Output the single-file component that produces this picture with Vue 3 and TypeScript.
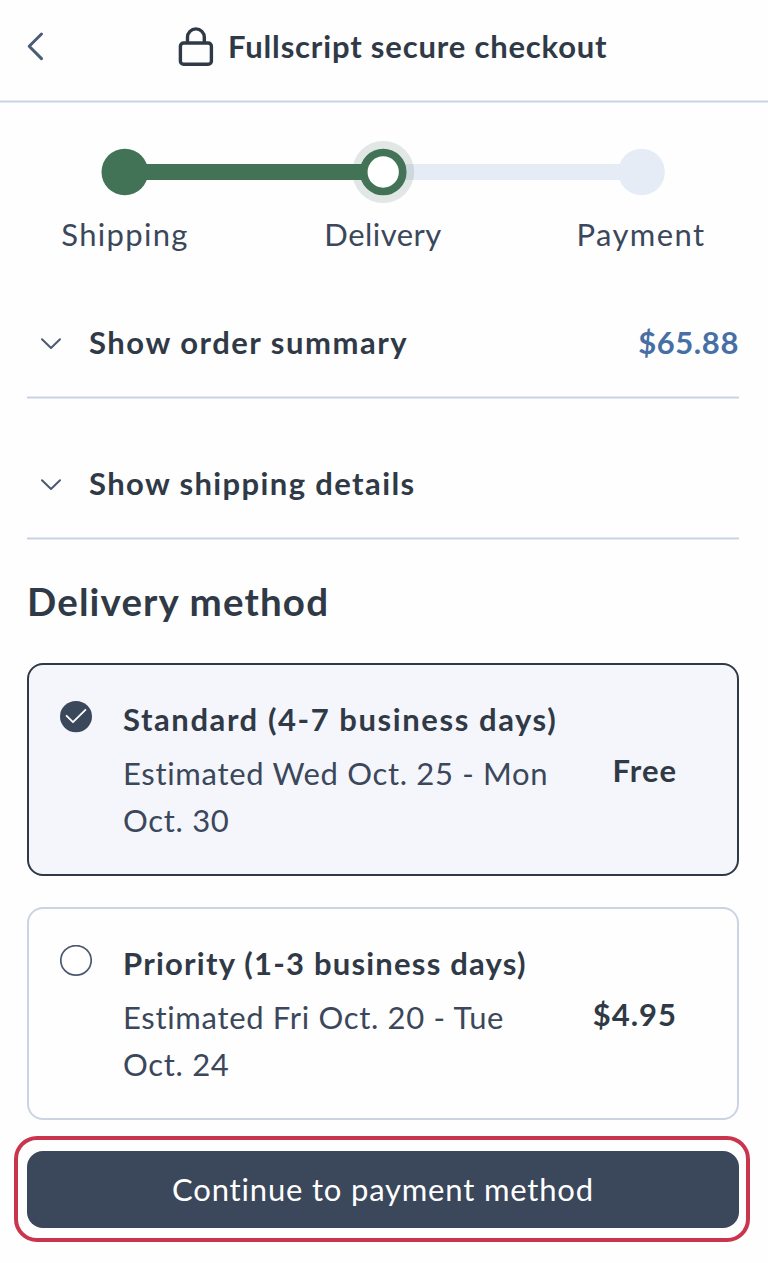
<script setup lang="ts">
import { ref } from 'vue'

interface Method {
  id: string
  title: string
  estimate: string
  price: string
}

const steps: string[] = ['Shipping', 'Delivery', 'Payment']
const methods: Method[] = [
  { id: 'standard', title: 'Standard (4-7 business days)', estimate: 'Estimated Wed Oct. 25 - Mon Oct. 30', price: 'Free' },
  { id: 'priority', title: 'Priority (1-3 business days)', estimate: 'Estimated Fri Oct. 20 - Tue Oct. 24', price: '$4.95' },
]
const selected = ref<string>('standard')
</script>

<template>
  <main class="checkout">
    <header class="header">
      <svg class="back" width="18" height="30" viewBox="0 0 18 30">
        <path d="M15.5 3 L3.2 15.2 L15.5 27.6" />
      </svg>
      <div class="brand">
        <svg class="lock" width="36" height="40" viewBox="0 0 36 40">
          <rect x="2.4" y="16" width="31" height="21.2" rx="3.2" />
          <path d="M9.5 16V10.3a8.4 8.4 0 0 1 16.8 0V16" />
        </svg>
        <h1>Fullscript secure checkout</h1>
      </div>
    </header>
    <div class="rule"></div>

    <section class="progress">
      <svg class="track" width="768" height="64" viewBox="0 0 768 64">
        <rect x="383" y="24" width="258" height="16" fill="#e6ecf5" />
        <circle cx="641.5" cy="32" r="23.3" fill="#e6ecf5" />
        <circle cx="383.2" cy="32" r="31" fill="#437356" fill-opacity="0.16" />
        <rect x="125" y="24" width="248" height="16" fill="#437356" />
        <circle cx="124.8" cy="32" r="23.3" fill="#437356" />
        <circle cx="383.2" cy="32" r="19.5" fill="#fff" stroke="#437356" stroke-width="7.7" />
      </svg>
      <div class="labels">
        <span v-for="s in steps" :key="s" :class="['label', s.toLowerCase()]">{{ s }}</span>
      </div>
    </section>

    <section class="toggle order">
      <svg class="chevron" width="22" height="14" viewBox="0 0 22 14"><path d="M2 2.2 L11 11 L20 2.2" /></svg>
      <span class="toggle-text">Show order summary</span>
      <span class="total">$65.88</span>
    </section>
    <div class="rule inset"></div>
    <section class="toggle details">
      <svg class="chevron" width="22" height="14" viewBox="0 0 22 14"><path d="M2 2.2 L11 11 L20 2.2" /></svg>
      <span class="toggle-text">Show shipping details</span>
    </section>
    <div class="rule inset"></div>

    <h2>Delivery method</h2>

    <div class="methods">
      <div
        v-for="m in methods"
        :key="m.id"
        :class="['card', m.id, { selected: m.id === selected }]"
        @click="selected = m.id"
      >
        <svg class="radio" width="32" height="32" viewBox="0 0 32 32">
          <template v-if="m.id === selected">
            <ellipse cx="16" cy="15.6" rx="16" ry="15.6" fill="#3b475a" />
            <path d="M6.6 14.8 L13 21.2 L25.4 8.8" fill="none" stroke="#fff" stroke-width="1.8" stroke-linecap="round" stroke-linejoin="round" />
          </template>
          <ellipse v-else cx="16" cy="15.4" rx="15.2" ry="14.8" fill="#fff" stroke="#4b5870" stroke-width="1.7" />
        </svg>
        <div class="info">
          <div class="title">{{ m.title }}</div>
          <div class="estimate">{{ m.estimate }}</div>
        </div>
        <div class="price">{{ m.price }}</div>
      </div>
    </div>

    <div class="highlight">
      <button type="button" class="continue">Continue to payment method</button>
    </div>
  </main>
</template>

<style>
body {
  background: #fff;
}
</style>

<style scoped>
.checkout {
  width: 768px;
  height: 1263px;
  box-sizing: border-box;
  overflow: hidden;
  background: #fefeff;
  font-family: Lato, "Open Sans", sans-serif;
  font-size: 31px;
  line-height: 46px;
  color: #3b475a;
}
.header {
  display: flex;
  height: 101px;
}
.back {
  margin: 31px 0 0 26px;
  flex: none;
}
.back path {
  fill: none;
  stroke: #4b5c75;
  stroke-width: 3;
  stroke-linecap: round;
  stroke-linejoin: round;
}
.brand {
  display: flex;
  margin-left: 134px;
}
.lock {
  margin: 27px 0 0;
  flex: none;
}
.lock rect,
.lock path {
  fill: none;
  stroke: #303a47;
  stroke-width: 3.4;
}
h1 {
  margin: 23px 0 0 14px;
  font-size: 31px;
  line-height: 46px;
  font-weight: 700;
  letter-spacing: 0.82px;
  color: #303a47;
  white-space: nowrap;
}
.rule {
  height: 1px;
  background: #c9d2e0;
  box-shadow: 0 -1px #e4e9f1, 0 1px #e4e9f1;
}
.rule.inset {
  margin: 0 29px 0 27px;
}
.progress {
  padding-top: 38px;
  height: 206px;
  box-sizing: border-box;
}
.track {
  display: block;
}
.labels {
  display: flex;
  justify-content: space-between;
  padding: 0 63px 0 61px;
  margin-top: 7px;
}
.label {
  display: flex;
  justify-content: center;
  width: 128px;
}
.shipping {
  letter-spacing: 1.3px;
}
.delivery {
  letter-spacing: 0.45px;
}
.payment {
  letter-spacing: 1.4px;
}
.toggle {
  display: flex;
  align-items: center;
  height: 46px;
  margin: 0 29px 0 40px;
  font-weight: 700;
  color: #303a47;
}
.order {
  padding-top: 11px;
  padding-bottom: 32px;
}
.details {
  padding-top: 62px;
  padding-bottom: 32px;
}
.chevron {
  flex: none;
  margin-top: 3px;
}
.chevron path {
  fill: none;
  stroke: #4b5870;
  stroke-width: 2;
  stroke-linecap: round;
  stroke-linejoin: round;
}
.toggle-text {
  margin-left: 27px;
}
.order .toggle-text {
  letter-spacing: 1.52px;
}
.details .toggle-text {
  letter-spacing: 1.38px;
}
.total {
  margin-left: auto;
  letter-spacing: 0.6px;
  color: #476fa5;
}
h2 {
  margin: 34px 0 0 27px;
  font-size: 38.5px;
  line-height: 56px;
  font-weight: 700;
  letter-spacing: 1.15px;
  color: #303a47;
}
.methods {
  display: flex;
  flex-direction: column;
  gap: 31px;
  margin: 34px 29px 0 27px;
}
.card {
  display: flex;
  box-sizing: border-box;
  height: 213px;
  padding: 31px 60px 31px 31px;
  border: 2px solid #cbd4e2;
  border-radius: 16px;
}
.card.selected {
  border-color: #303a47;
  background: #f5f6fb;
}
.radio {
  flex: none;
  margin-top: 5px;
}
.info {
  width: 440px;
  margin-left: 31px;
}
.title {
  font-weight: 700;
  color: #303a47;
  white-space: nowrap;
}
.standard .title {
  letter-spacing: 1.58px;
}
.priority .title {
  letter-spacing: 1.22px;
}
.estimate {
  margin-top: 8px;
  line-height: 46.5px;
  letter-spacing: 0.68px;
}
.price {
  align-self: center;
  margin-left: auto;
  font-weight: 700;
  letter-spacing: 1px;
  color: #303a47;
}
.highlight {
  box-sizing: border-box;
  width: 736px;
  height: 106px;
  margin: 16px 0 0 14px;
  padding: 11px 7px 10px 9px;
  border: 4px solid #c9354c;
  border-radius: 23px;
}
.continue {
  display: block;
  width: 712px;
  height: 77px;
  padding: 0 0 2px;
  border: 0;
  border-radius: 16px;
  background: #3b475a;
  color: #fff;
  font: inherit;
  letter-spacing: 0.82px;
}
</style>
